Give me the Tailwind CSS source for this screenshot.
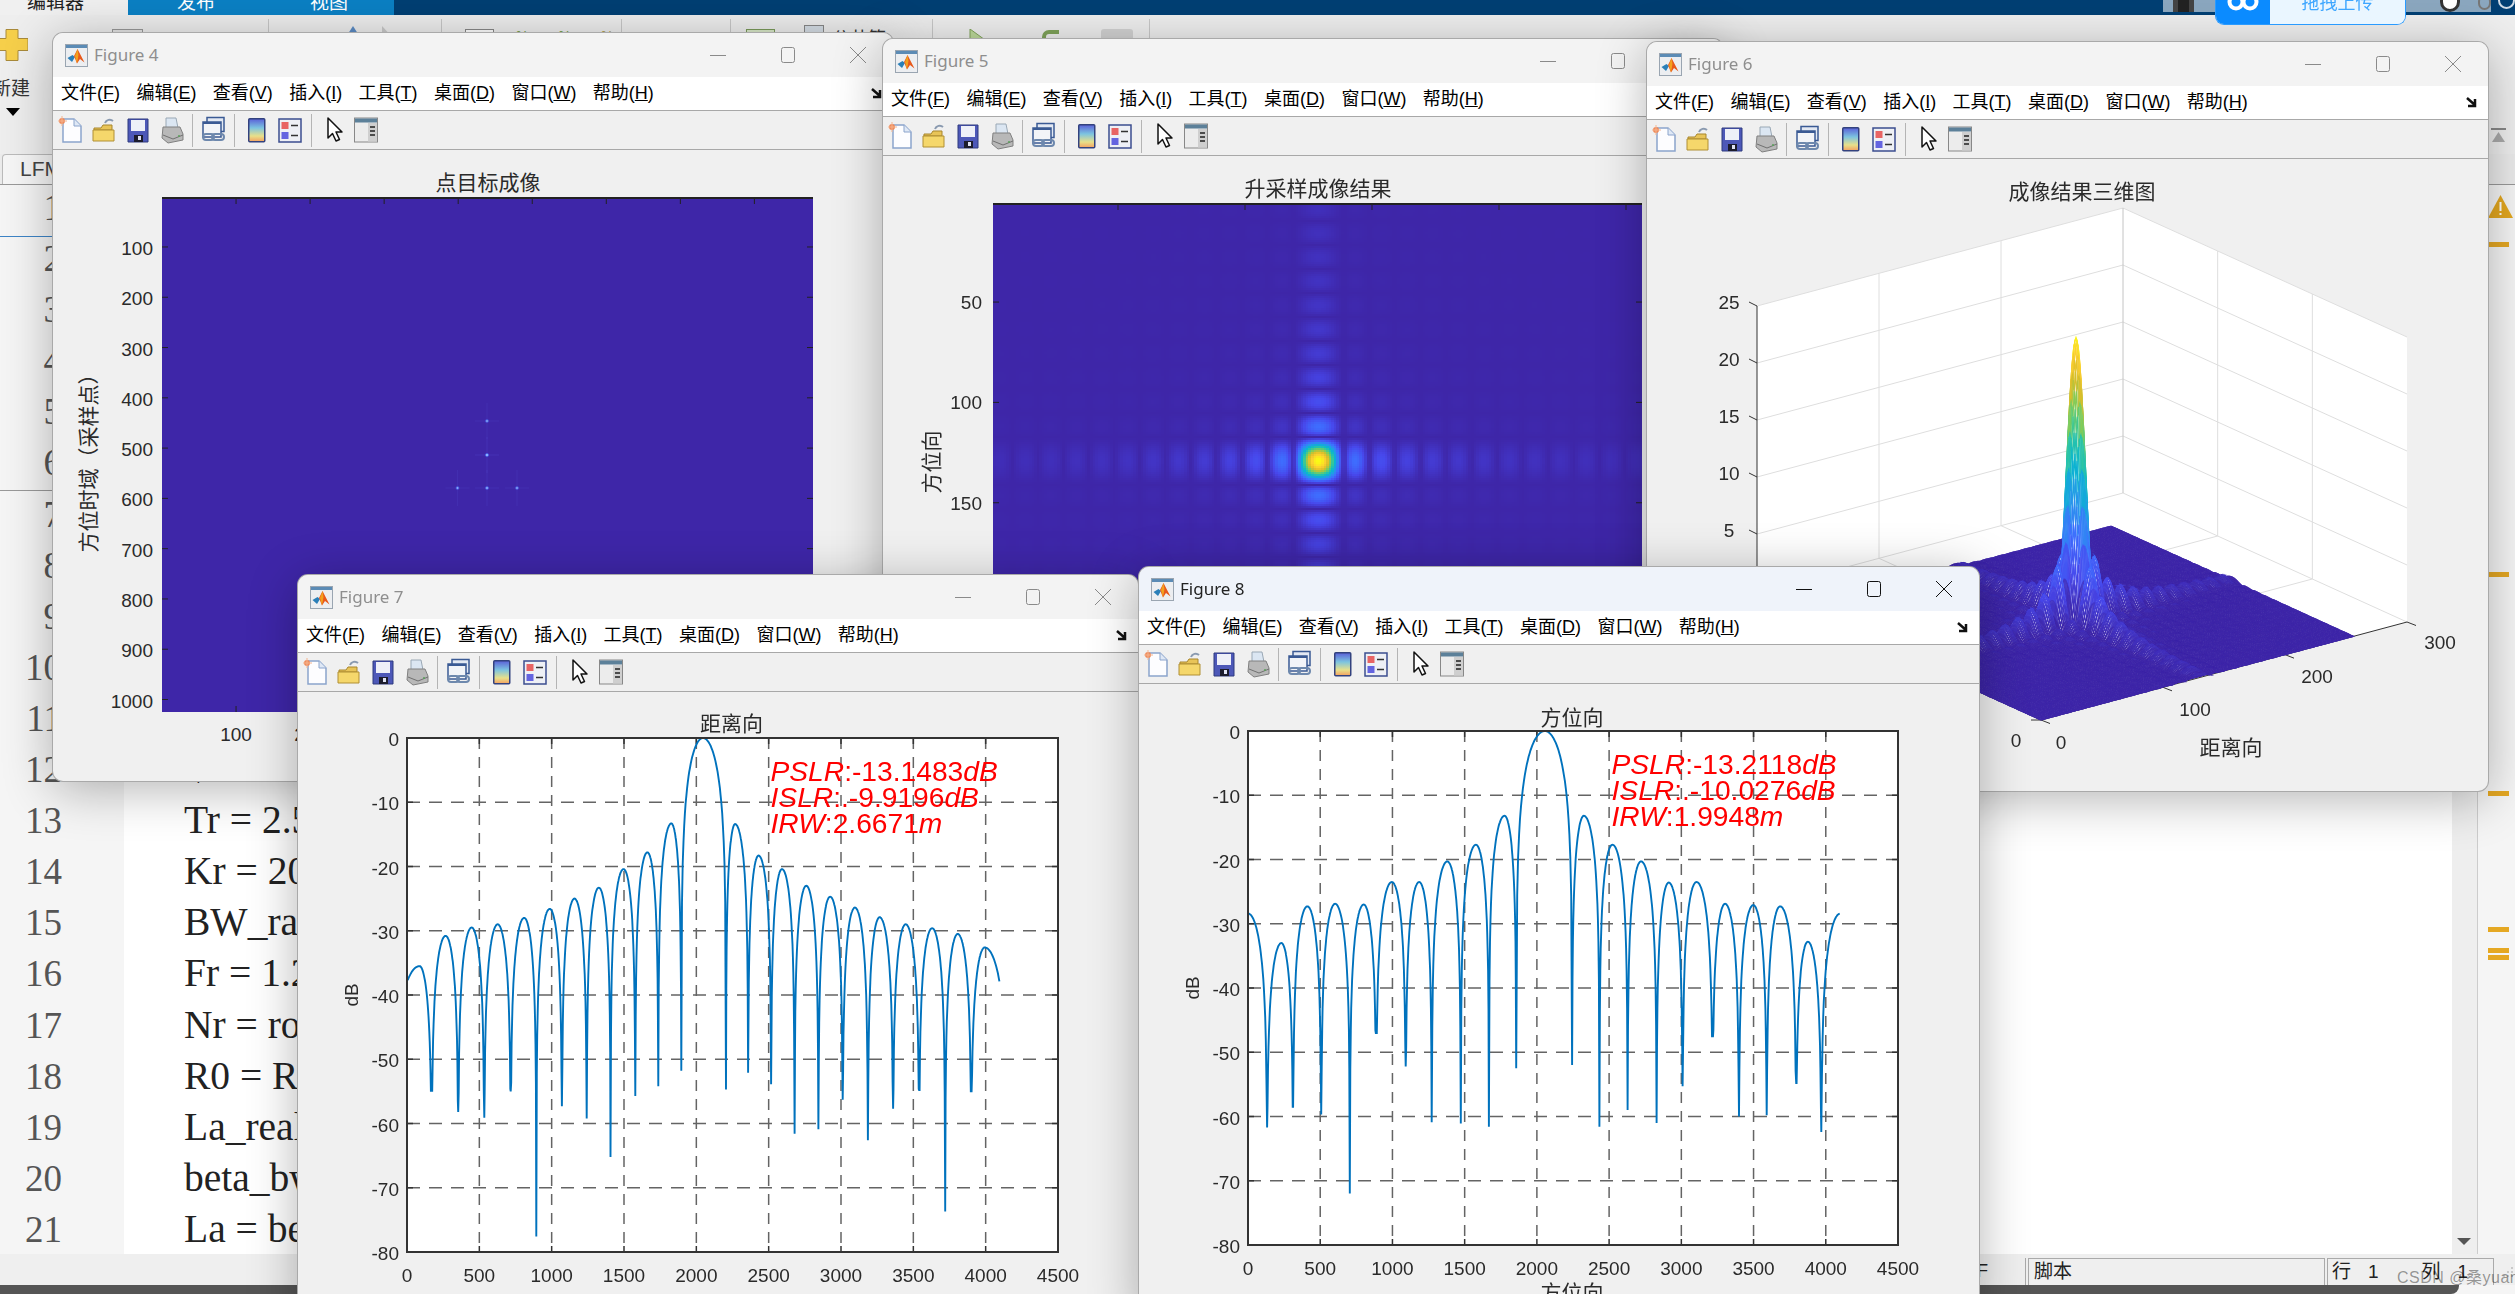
<!DOCTYPE html>
<html lang="zh-CN">
<head>
  <meta charset="UTF-8">
  <title>MATLAB Figures</title>
  <script src="https://cdn.jsdelivr.net/npm/@tailwindcss/browser@4"></script>
</head>
<body class="relative w-[2515px] h-[1294px] overflow-hidden bg-[#f5f5f5] text-[#222] font-['Liberation_Sans','Noto_Sans_CJK_SC',sans-serif]">

<!-- MATLAB main window -->
<div class="flex flex-col h-full">
  <!-- Top tab strip -->
  <div class="flex h-[15px] shrink-0 overflow-hidden bg-[#003f73] text-[19px] leading-[6px]">
    <div class="w-[128px] bg-[#f0f0f0] pl-[27px]">编辑器</div>
    <div class="flex w-[266px] bg-[#0b80c4] text-white">
      <span class="ml-[49px]">发布</span>
      <span class="ml-[95px]">视图</span>
    </div>
    <div class="flex-1"></div>
    <div class="flex items-center gap-[18px] w-[328px] h-[12px] bg-[#8ba7bf] pl-[10px]">
      <div class="w-[24px] h-[12px] bg-[#222] border-x-[5px] border-x-[#444]"></div>
      <div class="ml-[228px] w-[23px] h-[23px] rounded-full border-[3px] border-[#333] bg-white -mt-[12px]"></div>
      <div class="w-[15px] h-[15px] rounded-full border-2 border-[#777] -mt-[8px]"></div>
    </div>
    <div class="ml-[7px] w-[17px] h-[17px] rounded-full border-2 border-[#cfdbe6] -mt-[8px]"></div>
  </div>

  <!-- Ribbon -->
  <div class="flex h-[139px] shrink-0 bg-[#eeeeee] pt-[4px]">
    <div class="relative w-[269px] border-r border-[#c8c8c8]">
      <div class="flex h-[30px] mt-[11px] w-[28px] items-center justify-center">
        <svg width="28" height="32" viewBox="0 0 28 32"><path d="M6 0.5H18V9.5H28V21.5H18V31.5H6V21.5H-4V9.5H6Z" fill="#f6cf4a" stroke="#a98a3a"/></svg>
      </div>
      <div class="-ml-[8px] mt-[17px] text-[19px] leading-[24px] text-[#333]">新建</div>
      <div class="ml-[6px] mt-[7px] w-0 h-0 border-x-[7px] border-x-transparent border-t-[8px] border-t-black"></div>
      <div class="absolute left-[112px] top-[10px] w-[31px] h-[20px] border border-[#999] bg-[#e5e5e5]"></div>
    </div>
    <div class="flex w-[173px] border-r border-[#c8c8c8] pl-[75px] gap-[17px] pt-[7px]">
      <svg width="18" height="14" viewBox="0 0 18 14"><path d="M9 0L18 14H0Z" fill="#5b8bc4"/></svg>
      <svg width="18" height="14" viewBox="0 0 18 14"><path d="M3 0L16 14H3Z" fill="#c9c9c9"/></svg>
    </div>
    <div class="flex w-[180px] border-r border-[#c8c8c8] pl-[23px] pt-[10px] gap-[22px] text-[14px] leading-[14px] text-[#6a9a3a]">
      <div class="w-[29px] h-[12px] border border-[#888] bg-white"></div>
      <span>%</span><span class="ml-[8px]">%</span><span class="ml-[8px] text-[#a94]">%</span>
    </div>
    <div class="w-[109px] border-r border-[#c8c8c8]"></div>
    <div class="flex w-[202px] border-r border-[#c8c8c8] pl-[15px] pt-[10px] text-[18px] leading-[20px] text-[#333]">
      <div class="w-[29px] h-[12px] border border-[#7a9a5a] bg-[#d8e8c8]"></div>
      <div class="ml-[29px] -mt-[4px] w-[20px] h-[16px] border border-[#888] bg-[#d5dde5]"></div>
      <span class="ml-[8px]">公共等</span>
    </div>
    <div class="flex w-[217px] border-r border-[#c8c8c8] pl-[36px] pt-[10px]">
      <svg width="24" height="16" viewBox="0 0 24 16"><path d="M1 0L23 16H1Z" fill="#bcd99a" stroke="#7fa35a"/></svg>
      <svg class="ml-[48px]" width="20" height="16" viewBox="0 0 20 16"><path d="M3 16V8a5 5 0 0 1 5-5h10" fill="none" stroke="#7fa35a" stroke-width="4"/></svg>
      <div class="ml-[40px] w-[32px] h-[16px] rounded-[3px] bg-[#d2d2d2]"></div>
    </div>
    <div class="flex-1 flex justify-end pr-[9px] pt-[109px]">
      <svg width="15" height="15" viewBox="0 0 15 15"><rect width="15" height="2" fill="#888"/><path d="M7.5 4L14 14H1Z" fill="#aaa"/></svg>
    </div>
  </div>

  <!-- Document tabs -->
  <div class="flex h-[31px] shrink-0 border-b border-[#999] bg-[#ebebeb] pl-[2px]">
    <div class="w-[200px] rounded-t-[4px] border border-b-0 border-[#bbb] bg-[#f6f6f6] pl-[17px] text-[21px] leading-[28px] text-[#444]">LFM</div>
  </div>

  <!-- Editor -->
  <div class="relative flex flex-1 min-h-0 overflow-hidden">
    <div id="gutter" class="w-[124px] shrink-0 bg-[#f5f5f5] -mt-[3px] font-['Liberation_Serif',serif] text-[37px] text-[#555]"></div>
    <div id="code" class="flex-1 bg-white -mt-[3px] pl-[60px] font-['Liberation_Serif',serif] text-[39.5px] text-[#222]"></div>
    <div class="relative w-[25px] shrink-0 bg-[#eeeeee]">
      <div class="absolute bottom-[9px] left-[5px] w-0 h-0 border-x-[7px] border-x-transparent border-t-[7px] border-t-[#555]"></div>
    </div>
    <div class="w-[38px] shrink-0 border-l border-[#ccc] bg-[#f5f5f5] pl-[10px]">
      <svg class="mt-[10px]" width="25" height="23" viewBox="0 0 25 23"><path d="M12.5 0L25 23H0Z" fill="#e3a71f"/><rect x="11.5" y="7" width="2" height="9" fill="#fff"/><rect x="11.5" y="18" width="2" height="2" fill="#fff"/></svg>
      <div class="mt-[24px] w-[21px] h-[5px] bg-[#e5a823]"></div>
      <div class="mt-[325px] w-[21px] h-[5px] bg-[#e5a823]"></div>
      <div class="mt-[214px] w-[21px] h-[5px] bg-[#e5a823]"></div>
      <div class="mt-[131px] w-[21px] h-[5px] bg-[#e5a823]"></div>
      <div class="mt-[16px] w-[21px] h-[5px] bg-[#e5a823]"></div>
      <div class="mt-[2px] w-[21px] h-[5px] bg-[#e5a823]"></div>
    </div>
    <div class="absolute left-0 top-[51px] w-[124px] h-[1px] bg-[#3d84c6]"></div>
    <div class="absolute left-0 top-[305px] w-[124px] h-[1px] bg-[#999]"></div>
  </div>

  <!-- Status bar -->
  <div class="flex h-[31px] shrink-0 bg-[#efefef] pt-[4px] text-[19px] leading-[25px]">
    <div class="w-[2026px] text-right pr-[37px] border-r border-[#aaa]">F</div>
    <div class="ml-[2px] w-[297px] border-x border-t border-[#aaa] pl-[5px]">脚本</div>
    <div class="ml-[2px] flex w-[167px] border-x border-t border-[#aaa] pl-[4px]">
      <span>行</span><span class="ml-[17px]">1</span><span class="ml-[43px]">列</span><span class="ml-[17px]">1</span>
    </div>
    <svg class="ml-[7px] mt-[8px]" width="14" height="14" viewBox="0 0 14 14" fill="#bdbdbd"><circle cx="11" cy="2" r="1"/><circle cx="7" cy="6" r="1"/><circle cx="11" cy="6" r="1"/><circle cx="3" cy="10" r="1"/><circle cx="7" cy="10" r="1"/><circle cx="11" cy="10" r="1"/></svg>
  </div>
  <div class="h-[9px] w-[2459px] shrink-0 rounded-br-[8px] bg-[#555]"></div>
</div>

<!-- Figure windows -->
<div id="fig4" class="absolute left-[53px] top-[33px] z-10 flex h-[748px] w-[840px] flex-col overflow-hidden rounded-[10px] bg-[#f0f0f0] shadow-[0_0_0_1px_#a9a9a9,0_8px_50px_rgba(0,0,0,0.3)]"></div>
<div id="fig5" class="absolute left-[883px] top-[39px] z-20 flex h-[748px] w-[840px] flex-col overflow-hidden rounded-[10px] bg-[#f0f0f0] shadow-[0_0_0_1px_#a9a9a9,0_8px_50px_rgba(0,0,0,0.3)]"></div>
<div id="fig6" class="absolute left-[1647px] top-[42px] z-30 flex h-[749px] w-[841px] flex-col overflow-hidden rounded-[10px] bg-[#f0f0f0] shadow-[0_0_0_1px_#a9a9a9,0_8px_50px_rgba(0,0,0,0.3)]"></div>
<div id="fig7" class="absolute left-[298px] top-[575px] z-40 flex h-[748px] w-[840px] flex-col overflow-hidden rounded-[10px] bg-[#f0f0f0] shadow-[0_0_0_1px_#a9a9a9,0_8px_50px_rgba(0,0,0,0.3)]"></div>
<div id="fig8" class="absolute left-[1139px] top-[567px] z-50 flex h-[748px] w-[840px] flex-col overflow-hidden rounded-[10px] bg-[#f0f0f0] shadow-[0_0_0_1px_#a9a9a9,0_8px_50px_rgba(0,0,0,0.3)]"></div>

<!-- Upload widget from the browser extension -->
<div class="absolute left-[2215px] top-0 z-[60] flex h-[25px] w-[191px] overflow-hidden rounded-b-[9px] border border-t-0 border-[#2a9bff]">
  <div class="flex w-[54px] items-center justify-center bg-[#0b8bff]">
    <svg width="32" height="18" viewBox="0 0 32 18" class="-mt-[20px]"><circle cx="9" cy="9" r="6.5" fill="none" stroke="#fff" stroke-width="4"/><circle cx="23" cy="9" r="6.5" fill="none" stroke="#fff" stroke-width="4"/></svg>
  </div>
  <div class="flex-1 bg-[#eaf6ff] pt-0 text-center text-[18px] leading-[6px] text-[#3ea6ff]">拖拽上传</div>
</div>

<!-- Watermark -->
<div class="absolute left-[2397px] top-[1266px] z-[60] whitespace-nowrap text-[16px] tracking-[0.5px] text-black/40">CSDN @桑yuan~</div>

<script>
  // Editor rows
  const codeLines = ['', '', '', '', '', '', '', '', '', '', '', 'Vr = 150', 'Tr = 2.5', 'Kr = 20', 'BW_rang', 'Fr = 1.2', 'Nr = rou', 'R0 = R', 'La_real', 'beta_bw', 'La = bet'];
  document.getElementById('gutter').innerHTML = codeLines.map((_, i) =>
    `<div class="h-[51.1px] pr-[62px] text-right leading-[51px]">${i + 1}</div>`).join('');
  document.getElementById('code').innerHTML = codeLines.map(line =>
    `<div class="h-[51.1px] leading-[51px] whitespace-pre">${line}</div>`).join('');

  // Toolbar icons
  const icons = {
    matlab: `<svg width="23" height="23" viewBox="0 0 23 23"><rect x=".5" y=".5" width="22" height="22" fill="#eceef1" stroke="#9aa5b1"/><rect x="1" y="1" width="21" height="3" fill="#5b8bb5"/><path d="M2.5 14L7.5 11L10 13L7 18Z" fill="#2a7fb8"/><path d="M9 12L12.5 5L19.5 18.5L15 15L12 19.5Z" fill="#e8591c"/><path d="M12.5 5L10 12L12 19.5L13.5 11Z" fill="#f2a11f"/></svg>`,
    newFile: `<svg width="24" height="28" viewBox="0 0 24 28"><path d="M5 3H16L23 10V26H5Z" fill="#fdfdff" stroke="#8ba4cc" stroke-width="1.5"/><path d="M16 3V10H23" fill="#dfe8f5" stroke="#8ba4cc"/><circle cx="4" cy="5" r="3" fill="#ef8a5a"/><path d="M4 0V10M-1 5H9" stroke="#f4b48f"/></svg>`,
    open: `<svg width="24" height="28" viewBox="0 0 24 28"><path d="M13 7A5 5 0 0 1 21 5" fill="none" stroke="#8a9ab0" stroke-width="2"/><path d="M2 12H9L11 9H20V14H2Z" fill="#e8c458" stroke="#a8862c"/><path d="M1 14H22V25H1Z" fill="#f5d76b" stroke="#b08f34"/></svg>`,
    save: `<svg width="24" height="28" viewBox="0 0 24 28"><path d="M2 3H22V26H2Z" fill="#4d58b8" stroke="#2e3a7e"/><rect x="5" y="4" width="14" height="11" fill="#eef0f8"/><rect x="8" y="19" width="9" height="7" fill="#1c1c2c"/><rect x="12" y="20" width="3" height="4" fill="#dfe2f2"/></svg>`,
    print: `<svg width="24" height="28" viewBox="0 0 24 28"><path d="M6 2H16L18 12H6Z" fill="#dbe6f2" stroke="#9aa8b5"/><path d="M3 11L20 11L23 18V24L8 27L2 22Z" fill="#b8b8b8" stroke="#808080"/><path d="M3 19L13 23L23 19" fill="none" stroke="#707070"/><circle cx="19" cy="20" r="1" fill="#5aa05a"/></svg>`,
    link: `<svg width="24" height="28" viewBox="0 0 24 28"><rect x="5" y="1.5" width="17" height="14" fill="#e3e9f3" stroke="#3a5a94" stroke-width="1.5"/><rect x="1" y="6" width="18" height="15" fill="#f2f4f8" stroke="#3a5a94" stroke-width="1.5"/><rect x="1" y="6" width="18" height="2" fill="#3a5a94"/><rect x="1" y="18" width="11" height="6" rx="3" fill="none" stroke="#6d88ad" stroke-width="2"/><rect x="10" y="18" width="12" height="6" rx="3" fill="none" stroke="#6d88ad" stroke-width="2"/></svg>`,
    colorbar: `<svg width="24" height="28" viewBox="0 0 24 28"><defs><linearGradient id="cbar" x1="0" y1="0" x2="0" y2="1"><stop offset="0" stop-color="#5a5fd8"/><stop offset=".4" stop-color="#7cc4e0"/><stop offset=".75" stop-color="#e8e08a"/><stop offset="1" stop-color="#f4a060"/></linearGradient></defs><rect x="3.75" y="2.75" width="16" height="23" rx="1" fill="url(#cbar)" stroke="#33427e" stroke-width="1.5"/></svg>`,
    legend: `<svg width="24" height="28" viewBox="0 0 24 28"><rect x="1" y="3" width="22" height="23" fill="#eef0f5" stroke="#3b4d8f" stroke-width="1.5"/><rect x="3.5" y="6" width="7" height="7" fill="#e86464"/><rect x="3.5" y="16" width="7" height="7" fill="#6464e0"/><path d="M13 9.5H20M13 19.5H20" stroke="#333" stroke-width="1.5"/></svg>`,
    pointer: `<svg width="24" height="28" viewBox="0 0 24 28"><path d="M5 2V22L9.5 17.5L13 25L16.5 23.5L13 16L19 16Z" fill="#fff" stroke="#111" stroke-width="1.5" stroke-linejoin="round"/></svg>`,
    panel: `<svg width="24" height="28" viewBox="0 0 24 28"><rect x=".5" y="2" width="23" height="24" fill="#ececec" stroke="#888"/><rect x="1" y="2.5" width="22" height="4" fill="#5c8099"/><rect x="14" y="7" width="9" height="18.5" fill="#cfcfcf"/><path d="M16 11H21M16 15H21M16 19H21" stroke="#222" stroke-width="1.5"/></svg>`
  };

  function windowChrome(title, active) {
    const titleBar = active ? 'bg-[#eff3fa] text-[#222]' : 'bg-[#f3f3f3] text-[#8e8e8e]';
    const stroke = active ? '#111' : '#8a8a8a';
    return `
      <div class="flex h-[44px] shrink-0 items-center pl-[12px] ${titleBar}">
        ${icons.matlab}
        <span class="ml-[6px] font-['Noto_Sans'] text-[17px]">${title}</span>
        <div class="ml-auto flex">
          <div class="flex w-[70px] justify-center"><svg width="16" height="16"><path d="M0 8.5H16" stroke="${stroke}"/></svg></div>
          <div class="flex w-[70px] justify-center"><svg width="16" height="16"><rect x="1.5" y=".5" width="13" height="15" rx="2" fill="none" stroke="${stroke}"/></svg></div>
          <div class="flex w-[70px] justify-center"><svg width="18" height="16"><path d="M1 0L17 16M17 0L1 16" stroke="${stroke}"/></svg></div>
        </div>
      </div>
      <div class="flex h-[34px] shrink-0 items-center gap-[16.4px] border-b border-[#a8a8a8] bg-white pl-[8px] pr-[8px] text-[18px] text-black">
        <span>文件(<u>F</u>)</span><span>编辑(<u>E</u>)</span><span>查看(<u>V</u>)</span><span>插入(<u>I</u>)</span><span>工具(<u>T</u>)</span><span>桌面(<u>D</u>)</span><span>窗口(<u>W</u>)</span><span>帮助(<u>H</u>)</span>
        <svg class="ml-auto" width="14" height="14" viewBox="0 0 14 14"><path d="M1 2L9 9M9 3V10H2" fill="none" stroke="#111" stroke-width="2.5"/></svg>
      </div>
      <div class="flex h-[39px] shrink-0 items-center border-b border-[#a8a8a8] bg-[#f0f0f0]">
        <div class="ml-[5px]">${icons.newFile}</div>
        <div class="ml-[10px]">${icons.open}</div>
        <div class="ml-[10px]">${icons.save}</div>
        <div class="ml-[10px]">${icons.print}</div>
        <div class="ml-[8px] h-[33px] w-px bg-[#b4b4b4]"></div>
        <div class="ml-[9px]">${icons.link}</div>
        <div class="ml-[8px] h-[33px] w-px bg-[#b4b4b4]"></div>
        <div class="ml-[10px]">${icons.colorbar}</div>
        <div class="ml-[9px]">${icons.legend}</div>
        <div class="ml-[9px] h-[33px] w-px bg-[#b4b4b4]"></div>
        <div class="ml-[11px]">${icons.pointer}</div>
        <div class="ml-[7px]">${icons.panel}</div>
      </div>`;
  }

  // SVG drawn in page coordinates, the viewBox moves it into the window
  function plotSvg(left, top, body) {
    return `<svg class="absolute inset-0" width="840" height="640" viewBox="${left} ${top + 117} 840 640" fill="#2a2a2a" font-size="19">${body}</svg>`;
  }
  function label(x, y, text, anchor = 'middle') {
    return `<text x="${x}" y="${y + 7}" text-anchor="${anchor}">${text}</text>`;
  }
  function title(x, y, text) {
    return `<text x="${x}" y="${y + 8}" text-anchor="middle" font-size="21">${text}</text>`;
  }
  function rotated(x, y, text, size = 21) {
    return `<text transform="translate(${x} ${y}) rotate(-90)" y="7" text-anchor="middle" font-size="${size}">${text}</text>`;
  }
  function line(x1, y1, x2, y2, color, width = 1, extra = '') {
    return `<line x1="${x1}" y1="${y1}" x2="${x2}" y2="${y2}" stroke="${color}" stroke-width="${width}" ${extra}/>`;
  }

  // Parula colormap
  const parulaStops = [[62, 38, 168], [71, 71, 235], [62, 111, 255], [39, 150, 235], [8, 181, 208], [49, 198, 159], [129, 204, 89], [220, 189, 41], [252, 207, 48], [249, 251, 21]];
  function parula(v) {
    const p = Math.min(Math.max(v, 0), 0.9999) * (parulaStops.length - 1);
    const i = Math.floor(p), f = p - i;
    return parulaStops[i].map((c, k) => Math.round(c + (parulaStops[i + 1][k] - c) * f));
  }
  const sinc = u => Math.abs(u) < 1e-6 ? 1 : Math.sin(Math.PI * u) / (Math.PI * u);

  // Figure 4: image of the point targets
  function drawFigure4() {
    const host = document.getElementById('fig4');
    let s = `<rect x="162" y="198" width="651" height="514" fill="#3e26a8"/>`;
    s += line(162, 198, 813, 198, '#222', 2);
    const targets = [[487, 421, .7], [487, 455, 1], [487, 488, .8], [457.5, 488, .7], [517, 488, .7]];
    targets.forEach(([x, y, a]) => {
      s += line(x - 12, y, x + 12, y, '#6a78ff', 1, `opacity="${a * .14}"`) + line(x, y - 18, x, y + 18, '#6a78ff', 1, `opacity="${a * .14}"`);
      s += `<circle cx="${x}" cy="${y}" r="1.8" fill="#4f7cff" opacity="${a}"/><circle cx="${x}" cy="${y}" r=".8" fill="#d4f2ff" opacity="${a}"/>`;
    });
    for (let v = 100; v <= 800; v += 100) {
      const x = 162 + .7405 * v;
      s += line(x, 198, x, 204, '#222') + line(x, 712, x, 706, '#222');
    }
    for (let v = 100; v <= 1000; v += 100) {
      const y = 196.7 + .5028 * v;
      s += line(162, y, 168, y, '#222') + line(813, y, 807, y, '#222');
      s += label(153, y + 1, v, 'end');
    }
    [100, 200].forEach(v => { s += label(162 + .7405 * v, 734, v); });
    s += title(488, 182, '点目标成像') + rotated(89, 458, '方位时域（采样点）');
    host.innerHTML = windowChrome('Figure 4', false) + `<div class="relative flex-1">${plotSvg(53, 33, s)}</div>`;
  }

  // Figure 5: upsampled image around the target
  function drawFigure5() {
    const host = document.getElementById('fig5');
    let s = line(993, 204, 1642, 204, '#222', 2);
    [1118, 1245, 1372, 1499, 1626].forEach(x => { s += line(x, 204, x, 210, '#222'); });
    [50, 100, 150].forEach(v => {
      const y = 201.7 + 2.007 * v;
      s += line(993, y, 999, y, '#222') + line(1642, y, 1636, y, '#222') + label(982, y, v, 'end');
    });
    s += title(1318, 188, '升采样成像结果') + rotated(932, 462, '方位向');
    host.innerHTML = windowChrome('Figure 5', false) + `<div class="relative flex-1"><canvas id="img5" width="649" height="514" class="absolute left-[110px] top-[48px] h-[514px] w-[649px]"></canvas>${plotSvg(883, 39, s)}</div>`;

    const ctx = document.getElementById('img5').getContext('2d');
    const img = ctx.createImageData(649, 514);
    for (let py = 0; py < 514; py++) {
      const sy = Math.floor(py / 2) * 2 + 1;
      for (let px = 0; px < 649; px++) {
        const sx = (Math.floor(px / 2.54) + .5) * 2.54;
        const v = Math.abs(sinc((sx - 325) / 25.5) * sinc((sy - 257) / 24));
        const [r, g, b] = parula(v);
        const o = (py * 649 + px) * 4;
        img.data[o] = r; img.data[o + 1] = g; img.data[o + 2] = b; img.data[o + 3] = 255;
      }
    }
    ctx.putImageData(img, 0, 0);
  }

  // Figure 6: mesh of the same response
  function drawFigure6() {
    const host = document.getElementById('fig6');
    const G = [2041, 720], U = [366, -98], V = [-284, -129], Z = 57 / 5;
    const project = (u, v, z) => [G[0] + u * U[0] + v * V[0], G[1] + u * U[1] + v * V[1] - z * Z];
    const poly = pts => `<polygon points="${pts.map(p => p.join(',')).join(' ')}" fill="#fff"/>`;
    const seg = (a, b, c = '#dedede') => line(a[0], a[1], b[0], b[1], c);
    let s = poly([project(0, 1, 0), project(1, 1, 0), project(1, 1, 25), project(0, 1, 25)]);
    s += poly([project(1, 1, 0), project(1, 0, 0), project(1, 0, 25), project(1, 1, 25)]);
    s += poly([project(0, 0, 0), project(1, 0, 0), project(1, 1, 0), project(0, 1, 0)]);
    for (let z = 0; z <= 25; z += 5) {
      s += seg(project(0, 1, z), project(1, 1, z)) + seg(project(1, 1, z), project(1, 0, z));
    }
    [1 / 3, 2 / 3].forEach(t => {
      s += seg(project(t, 1, 0), project(t, 1, 25)) + seg(project(1, t, 0), project(1, t, 25));
      s += seg(project(t, 0, 0), project(t, 1, 0)) + seg(project(0, t, 0), project(1, t, 0));
    });
    s += seg(project(1, 1, 0), project(1, 1, 25), '#c4c4c4');
    // axes
    s += seg(project(0, 1, 0), project(0, 1, 25), '#333');
    s += seg(project(0, 0, 0), project(1, 0, 0), '#333') + seg(project(0, 0, 0), project(0, 1, 0), '#333');
    for (let z = 5; z <= 25; z += 5) {
      const p = project(0, 1, z);
      s += line(p[0], p[1], p[0] - 8, p[1] - 4, '#333') + label(p[0] - 28, p[1] - 4, z);
    }
    [0, 1, 2, 3].forEach(k => {
      const p = project(k / 3, 0, 0);
      s += line(p[0], p[1], p[0] + 9, p[1] + 3.5, '#333');
    });
    s += line(2031, 720, 2041, 720, '#333');
    s += label(2016, 740, 0) + label(2061, 742, 0) + label(2195, 709, 100) + label(2317, 676, 200) + label(2440, 642, 300);
    s += `<text x="2231" y="755" text-anchor="middle" font-size="21">距离向</text>`;
    s += title(2082, 191, '成像结果三维图');
    host.innerHTML = windowChrome('Figure 6', false) + `<div class="relative flex-1">${plotSvg(1647, 42, s)}<canvas id="mesh6" width="841" height="632" class="absolute inset-0 h-[632px] w-[841px]"></canvas></div>`;

    const ctx = document.getElementById('mesh6').getContext('2d');
    ctx.translate(-1647, -159);
    ctx.lineWidth = 1.2;
    const N = 256, heights = [];
    for (let i = 0; i <= N; i++) {
      heights.push([]);
      for (let j = 0; j <= N; j++) {
        heights[i].push(25 * Math.abs(sinc((i - 128) / 10.5) * sinc((j - 128) / 10.5)));
      }
    }
    const lut = [];
    for (let k = 0; k <= 64; k++) lut.push(`rgb(${parula(k / 64).join(',')})`);
    const pt = (i, j) => project(i / 300, j / 300, heights[i][j]);
    ctx.fillStyle = '#fff';
    for (let i = N - 1; i >= 0; i--) {
      for (let j = N - 1; j >= 0; j--) {
        const a = pt(i, j), b = pt(i + 1, j), c = pt(i + 1, j + 1), d = pt(i, j + 1);
        ctx.beginPath();
        ctx.moveTo(a[0], a[1]); ctx.lineTo(b[0], b[1]); ctx.lineTo(c[0], c[1]); ctx.lineTo(d[0], d[1]); ctx.closePath();
        ctx.fill();
        ctx.strokeStyle = lut[Math.round(heights[i][j] / 25 * 64)];
        ctx.stroke();
      }
    }
  }

  // Sidelobe curve: alternating nulls and peaks, each half lobe is a sine in dB
  function lobePath(points, xMax, toX, toY) {
    const out = [];
    const push = (x, db) => { if (x >= 0 && x <= xMax) out.push(`${toX(x).toFixed(1)} ${toY(db).toFixed(1)}`); };
    const steps = 30;
    for (let i = 1; i < points.length; i += 2) {
      const [n1x, n1y] = points[i - 1], [px, py] = points[i], [n2x, n2y] = points[i + 1];
      for (let k = 0; k <= steps; k++) {
        const t = k / steps;
        push(n1x + (px - n1x) * t, Math.max(n1y, py + 20 * Math.log10(Math.max(Math.sin(t * Math.PI / 2), 1e-4))));
      }
      for (let k = steps - 1; k >= 0; k--) {
        const t = k / steps;
        push(n2x + (px - n2x) * t, Math.max(n2y, py + 20 * Math.log10(Math.max(Math.sin(t * Math.PI / 2), 1e-4))));
      }
    }
    return 'M' + out.join('L');
  }

  function lobePlot(host, name, win, box, labelY, titleY, titleText, xLabelText, dbX, notes, points, xMax) {
    const [l, t, w, h] = box;
    const toX = x => l + x / 4500 * w, toY = db => t + (-db) / 80 * h;
    let s = `<rect x="${l}" y="${t}" width="${w}" height="${h}" fill="#fff"/>`;
    for (let x = 500; x < 4500; x += 500) {
      s += line(toX(x), t, toX(x), t + h, '#646464', 1.5, 'stroke-dasharray="11 8"');
      s += line(toX(x), t, toX(x), t + 6, '#333', 1.5) + line(toX(x), t + h, toX(x), t + h - 6, '#333', 1.5);
    }
    for (let db = -10; db > -80; db -= 10) {
      s += line(l, toY(db), l + w, toY(db), '#646464', 1.5, 'stroke-dasharray="13 9"');
      s += line(l, toY(db), l + 6, toY(db), '#333', 1.5) + line(l + w, toY(db), l + w - 6, toY(db), '#333', 1.5);
    }
    s += `<path d="${lobePath(points, xMax, toX, toY)}" fill="none" stroke="#0072bd" stroke-width="1.9"/>`;
    s += `<rect x="${l}" y="${t}" width="${w}" height="${h}" fill="none" stroke="#333" stroke-width="2"/>`;
    for (let db = 0; db >= -80; db -= 10) s += label(l - 8, toY(db) + 1, db, 'end');
    for (let x = 0; x <= 4500; x += 500) s += label(toX(x), labelY, x);
    s += title(l + w / 2 - 1, titleY, titleText) + rotated(dbX, t + h / 2, 'dB', 19);
    if (xLabelText) s += `<text x="${l + w / 2 - 1}" y="1300" text-anchor="middle" font-size="21">${xLabelText}</text>`;
    notes.forEach((n, i) => {
      s += `<text x="${l + 363.5}" y="${t + 43 + i * 26}" fill="#ff0000" font-size="28.2"><tspan font-style="italic">${n[0]}</tspan>${n[1]}<tspan font-style="italic">${n[2]}</tspan></text>`;
    });
    host.innerHTML = windowChrome(name, win.active) + `<div class="relative flex-1">${plotSvg(win.left, win.top, s)}</div>`;
  }

  const rangeLobes = [[-102, -60], [87, -35.5], [171, -54.9], [267, -30.8], [354, -58.2], [447, -29.5], [534, -59.1], [627, -29], [717, -55], [810, -28], [894, -77.6], [987, -26.6], [1071, -57.3], [1158, -25], [1242, -59.2], [1326, -23.3], [1407, -65.2], [1497, -20.4], [1578, -55.7], [1662, -17.8], [1737, -54.2], [1827, -13.3], [1896, -51.8], [2046, 0], [2205, -54.7], [2268, -13.4], [2358, -52.1], [2430, -18.3], [2517, -53.9], [2592, -20.4], [2679, -61.6], [2760, -23], [2844, -60.9], [2925, -24.7], [3012, -56.3], [3096, -26.4], [3186, -62.6], [3267, -27.9], [3360, -57.7], [3447, -29], [3540, -54.8], [3630, -29.6], [3720, -73.7], [3807, -30.5], [3900, -55], [3993, -32.6], [4154, -60]];
  const azimuthLobes = [[-130, -60], [0, -28.4], [132, -61.7], [231, -33], [312, -58.5], [411, -27.3], [507, -59.7], [603, -26.9], [705, -72], [801, -27], [888, -47], [996, -23.5], [1092, -52.2], [1185, -23.5], [1272, -60.9], [1380, -20.3], [1473, -61.1], [1578, -17.7], [1668, -61.6], [1776, -13.2], [1857, -52.5], [2055, 0], [2244, -52], [2325, -13.2], [2433, -61.6], [2523, -17.7], [2628, -59], [2721, -20.3], [2829, -61], [2913, -23.6], [3009, -55.3], [3105, -23.5], [3216, -47.5], [3303, -26.9], [3399, -60], [3498, -27.1], [3591, -59.8], [3684, -27.3], [3795, -54.8], [3876, -32.8], [3969, -62.4], [4101, -28.4], [4230, -60]];

  drawFigure4();
  drawFigure5();
  drawFigure6();
  lobePlot(document.getElementById('fig7'), 'Figure 7', { left: 298, top: 575, active: false }, [407, 738, 651, 514], 1275, 723, '距离向', '', 351,
    [['PSLR', ':-13.1483', 'dB'], ['ISLR', ':.-9.9196', 'dB'], ['IRW', ':2.6671', 'm']], rangeLobes, 4095);
  lobePlot(document.getElementById('fig8'), 'Figure 8', { left: 1139, top: 567, active: true }, [1248, 731, 650, 514], 1268, 717, '方位向', '方位向', 1192,
    [['PSLR', ':-13.2118', 'dB'], ['ISLR', ':.-10.0276', 'dB'], ['IRW', ':1.9948', 'm']], azimuthLobes, 4100);
</script>
</body>
</html>
